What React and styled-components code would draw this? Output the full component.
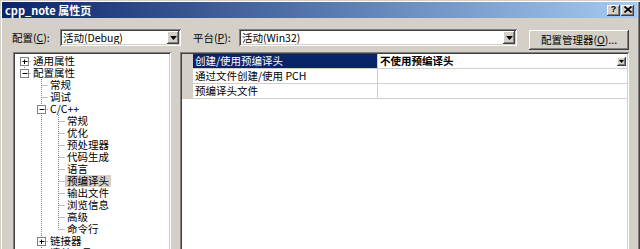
import React from "react";
import styled, { createGlobalStyle } from "styled-components";

const colors = {
  face: "#d4d0c8",
  shadow: "#808080",
  dark: "#404040",
  light: "#ffffff",
  navy: "#0a246a",
  titleEnd: "#a6caf0",
};

const font = `"Noto Sans CJK SC", "Liberation Sans", sans-serif`;

const raised = `
  box-shadow: inset -1px -1px 0 ${colors.dark}, inset 1px 1px 0 ${colors.light},
    inset -2px -2px 0 ${colors.shadow}, inset 2px 2px 0 ${colors.face};
`;

const sunken = `
  box-shadow: inset 1px 1px 0 ${colors.shadow}, inset -1px -1px 0 ${colors.light},
    inset 2px 2px 0 ${colors.dark}, inset -2px -2px 0 ${colors.face};
`;

const GlobalStyle = createGlobalStyle`
  html, body {
    margin: 0;
    padding: 0;
    background: ${colors.face};
    overflow: hidden;
  }
  * { box-sizing: border-box; }
`;

const Window = styled.div`
  width: 640px;
  height: 249px;
  padding: 2px 3px 0 2px;
  background: ${colors.face};
  box-shadow: inset 1px 1px 0 ${colors.face}, inset 2px 2px 0 ${colors.light},
    inset -1px 0 0 ${colors.dark}, inset -2px 0 0 ${colors.shadow};
  font-family: ${font};
  font-size: 10.5px;
  color: #000;
  display: flex;
  flex-direction: column;
  overflow: hidden;
`;

const TitleBar = styled.div`
  height: 16px;
  flex: none;
  display: flex;
  align-items: center;
  padding: 0 3px 0 3px;
  background: linear-gradient(to right, ${colors.navy}, ${colors.titleEnd});
`;

const TitleText = styled.span`
  flex: 1;
  color: #fff;
  font-weight: bold;
  font-size: 11px;
  line-height: 16px;
  white-space: nowrap;
`;

const CaptionButtons = styled.div`
  display: flex;
  gap: 1px;
`;

const CaptionButton = styled.div`
  width: 13px;
  height: 11px;
  background: ${colors.face};
  ${raised}
  display: flex;
  align-items: center;
  justify-content: center;
  font-family: "Liberation Sans", sans-serif;
  font-weight: bold;
  font-size: 9px;
  line-height: 11px;
  padding-bottom: 1px;
`;

const Toolbar = styled.div`
  flex: none;
  height: 20px;
  margin-top: 11px;
  padding-left: 10px;
  display: flex;
  align-items: flex-start;
`;

const FieldLabel = styled.span`
  width: ${(p) => p.$width}px;
  margin-left: ${(p) => p.$offset || 0}px;
  height: 17px;
  line-height: 17px;
  white-space: nowrap;
`;

const Accel = styled.span`
  text-decoration: underline;
  text-underline-offset: 1px;
`;

const Combo = styled.div`
  width: ${(p) => p.$width}px;
  height: 17px;
  padding: 2px 2px 2px 3px;
  background: #fff;
  ${sunken}
  display: flex;
  align-items: center;
  line-height: 13px;
  white-space: nowrap;
`;

const ComboText = styled.span`
  flex: 1;
  overflow: hidden;
`;

const DropButton = styled.div`
  width: ${(p) => p.$size || 12}px;
  height: ${(p) => p.$size || 13}px;
  flex: none;
  background: ${colors.face};
  ${raised}
  display: flex;
  align-items: center;
  justify-content: center;
`;

const PushButton = styled.div`
  width: 100px;
  height: 20px;
  margin-left: 12px;
  margin-top: 1px;
  background: ${colors.face};
  ${raised}
  display: flex;
  align-items: center;
  justify-content: center;
  line-height: 18px;
  white-space: nowrap;
`;

const Main = styled.div`
  flex: none;
  height: 220px;
  margin-top: 3px;
  padding-left: 11px;
  display: flex;
  gap: 9px;
`;

const TreePanel = styled.div`
  width: 158px;
  height: 100%;
  background: #fff;
  ${sunken}
  padding: 3px 2px 0 2px;
  overflow: hidden;
`;

const TreeRow = styled.div`
  height: 12px;
  display: flex;
  align-items: center;
`;

const TreeLabel = styled.span`
  padding: 0 2px;
  line-height: 12px;
  white-space: nowrap;
  background: ${(p) => (p.$selected ? colors.face : "transparent")};
`;

const GridPanel = styled.div`
  width: 449px;
  height: 100%;
  background: #fff;
  ${sunken}
  padding: 2px;
`;

const GridRow = styled.div`
  display: grid;
  grid-template-columns: 11px 184px 1fr;
  height: 15px;
`;

const Gutter = styled.div`
  background: ${colors.face};
`;

const NameCell = styled.div`
  padding-left: 2px;
  line-height: 14px;
  height: 15px;
  white-space: nowrap;
  border-bottom: 1px solid ${colors.face};
  background: ${(p) => (p.$selected ? colors.navy : "#fff")};
  background-clip: content-box;
  color: ${(p) => (p.$selected ? "#fff" : "#000")};
  box-shadow: ${(p) => (p.$selected ? `inset 2px 0 0 ${colors.navy}` : "none")};
`;

const ValueCell = styled.div`
  display: flex;
  align-items: center;
  padding: 0 1px 0 2px;
  height: 15px;
  line-height: 14px;
  border-left: 1px solid ${colors.face};
  border-bottom: 1px solid ${colors.face};
  font-weight: ${(p) => (p.$bold ? "bold" : "normal")};
  white-space: nowrap;
`;

const ValueText = styled.span`
  flex: 1;
`;

const Arrow = ({ w = 7, h = 4 }) => (
  <svg width={w} height={h} viewBox={`0 0 ${w} ${h}`}>
    <polygon points={`0,0 ${w},0 ${w / 2},${h}`} fill="#000" />
  </svg>
);

const CloseGlyph = () => (
  <svg width="8" height="7" viewBox="0 0 8 7">
    <path d="M0.5 0.5 L7.5 6.5 M7.5 0.5 L0.5 6.5" stroke="#000" strokeWidth="1.6" />
  </svg>
);

const IND = 17;

const TreeGuide = ({ level, trail, first, hasNext, box }) => {
  const width = 16 + IND * level;
  const cx = 9 + IND * level + 0.5;
  const dash = { stroke: colors.shadow, strokeDasharray: "1 1", strokeWidth: 1 };
  return (
    <svg width={width} height="12" viewBox={`0 0 ${width} 12`} style={{ flex: "none" }}>
      {trail.map((on, k) =>
        on ? <line key={k} x1={9 + IND * k + 0.5} y1="0" x2={9 + IND * k + 0.5} y2="12" {...dash} /> : null
      )}
      <line x1={cx} y1={first ? 6 : 0} x2={cx} y2={hasNext ? 12 : 6} {...dash} />
      <line x1={cx} y1="6.5" x2={width} y2="6.5" {...dash} />
      {box && (
        <g>
          <rect x={cx - 4} y="2.5" width="8" height="8" fill="#fff" stroke={colors.shadow} />
          <line x1={cx - 2} y1="6.5" x2={cx + 3} y2="6.5" stroke="#000" />
          {box === "plus" && <line x1={cx} y1="4.5" x2={cx} y2="9" stroke="#000" />}
        </g>
      )}
    </svg>
  );
};

const cppChildren = ["常规", "优化", "预处理器", "代码生成", "语言", "预编译头", "输出文件", "浏览信息", "高级", "命令行"];

const treeRows = [
  { label: "通用属性", level: 0, trail: [], first: true, hasNext: true, box: "plus" },
  { label: "配置属性", level: 0, trail: [], hasNext: false, box: "minus" },
  { label: "常规", level: 1, trail: [false], hasNext: true },
  { label: "调试", level: 1, trail: [false], hasNext: true },
  { label: "C/C++", level: 1, trail: [false], hasNext: true, box: "minus" },
  ...cppChildren.map((label, i) => ({
    label,
    level: 2,
    trail: [false, true],
    hasNext: i < cppChildren.length - 1,
    selected: label === "预编译头",
  })),
  { label: "链接器", level: 1, trail: [false], hasNext: true, box: "plus" },
  { label: "清单工具", level: 1, trail: [false], hasNext: true, box: "plus" },
];

const gridRows = [
  { name: "创建/使用预编译头", value: "不使用预编译头", selected: true },
  { name: "通过文件创建/使用 PCH", value: "" },
  { name: "预编译头文件", value: "" },
];

export default function App() {
  return (
    <>
      <GlobalStyle />
      <Window>
        <TitleBar>
          <TitleText>cpp_note 属性页</TitleText>
          <CaptionButtons>
            <CaptionButton>?</CaptionButton>
            <CaptionButton>
              <CloseGlyph />
            </CaptionButton>
          </CaptionButtons>
        </TitleBar>

        <Toolbar>
          <FieldLabel $width={48}>
            配置(<Accel>C</Accel>):
          </FieldLabel>
          <Combo $width={121}>
            <ComboText>活动(Debug)</ComboText>
            <DropButton>
              <Arrow />
            </DropButton>
          </Combo>
          <FieldLabel $width={46} $offset={12}>
            平台(<Accel>P</Accel>):
          </FieldLabel>
          <Combo $width={278}>
            <ComboText>活动(Win32)</ComboText>
            <DropButton>
              <Arrow />
            </DropButton>
          </Combo>
          <PushButton>
            配置管理器(<Accel>O</Accel>)...
          </PushButton>
        </Toolbar>

        <Main>
          <TreePanel>
            {treeRows.map((row, i) => (
              <TreeRow key={i}>
                <TreeGuide {...row} />
                <TreeLabel $selected={row.selected}>{row.label}</TreeLabel>
              </TreeRow>
            ))}
          </TreePanel>

          <GridPanel>
            {gridRows.map((row, i) => (
              <GridRow key={i}>
                <Gutter />
                <NameCell $selected={row.selected}>{row.name}</NameCell>
                <ValueCell $bold={row.selected}>
                  <ValueText>{row.value}</ValueText>
                  {row.selected && (
                    <DropButton $size={9}>
                      <Arrow w={5} h={3} />
                    </DropButton>
                  )}
                </ValueCell>
              </GridRow>
            ))}
          </GridPanel>
        </Main>
      </Window>
    </>
  );
}
